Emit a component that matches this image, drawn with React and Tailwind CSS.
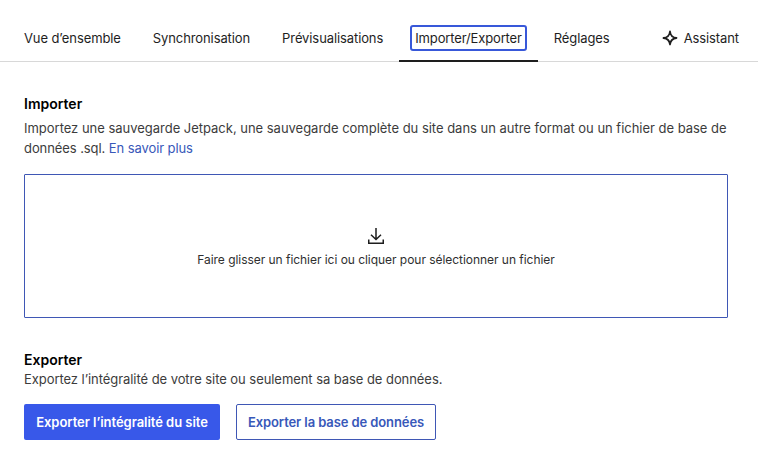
import React from "react";

const tabs = ["Vue d’ensemble", "Synchronisation", "Prévisualisations", "Importer/Exporter", "Réglages"];

function Tab({ label }) {
  const active = label === "Importer/Exporter";
  return (
    <button
      className={
        active
          ? "flex h-[62px] items-start border-b-2 border-[#1e1e1e] pl-[11px] pr-[11px] pt-[25px]"
          : "flex h-[62px] items-start px-[16px] pt-[25px]"
      }
    >
      <span
        className={
          active
            ? "flex h-[26px] items-center rounded-[3px] border-2 border-[#3858d9] px-[3px] tracking-[-0.14px]"
            : "flex h-[26px] items-center"
        }
      >
        {label}
      </span>
    </button>
  );
}

export default function App() {
  return (
    <div className="h-[464px] w-[758px] overflow-hidden bg-white font-['Inter',sans-serif] text-[13px] leading-[20px] text-[#1e1e1e]">
      <nav className="flex h-[62px] items-start border-b border-[#d8d8d8] pl-[8px] pr-[19px] tracking-[-0.1px]">
        {tabs.map((t) => (
          <Tab key={t} label={t} />
        ))}
        <div className="ml-auto flex h-[76px] items-center gap-[6px]">
          <svg width="16" height="16" viewBox="0 0 16 16" fill="none" stroke="#1e1e1e" strokeWidth="1.8" strokeLinejoin="round">
            <path d="M8 1.5C8.4 5.4 10.4 7.6 14.5 8C10.4 8.4 8.4 10.6 8 14.5C7.6 10.6 5.6 8.4 1.5 8C5.6 7.6 7.6 5.4 8 1.5Z" />
          </svg>
          <span>Assistant</span>
        </div>
      </nav>

      <main className="px-[24px] pt-[32px]">
        <h2 className="text-[14px] font-semibold leading-[20px] text-black">Importer</h2>
        <p className="mt-[4px] tracking-[-0.02px] text-[#3c3c3c]">
          Importez une sauvegarde Jetpack, une sauvegarde complète du site dans un autre format ou un fichier de base de{" "}
          <span className="tracking-[-0.08px]">données .sql.</span>{" "}
          <a className="tracking-[-0.1px] text-[#3858b9]">En savoir plus</a>
        </p>

        <div className="mt-[16px] flex h-[144px] w-[704px] flex-col items-center justify-center rounded-[1px] border border-[#3f57b5] pt-[1px]">
          <svg width="24" height="24" viewBox="0 0 24 24" fill="none" stroke="#1e1e1e" strokeWidth="1.5">
            <path d="M12 4V15.5M7 10.8L12 15.5L17 10.8M4.75 15.5V19.25H19.25V15.5" />
          </svg>
          <span className="mt-[2px] text-[12px] leading-[20px] tracking-[-0.04px] text-[#2f2f2f]">
            Faire glisser un fichier ici ou cliquer pour sélectionner un fichier
          </span>
        </div>

        <h2 className="mt-[32px] text-[14px] font-semibold leading-[19px] text-black">Exporter</h2>
        <p className="tracking-[-0.06px] text-[#3c3c3c]">Exportez l’intégralité de votre site ou seulement sa base de données.</p>

        <div className="mt-[15px] flex gap-[16px]">
          <button className="h-[36px] w-[196px] rounded-[2px] bg-[#3858e9] font-semibold tracking-[-0.04px] text-white">
            Exporter l’intégralité du site
          </button>
          <button className="h-[36px] w-[200px] rounded-[2px] border border-[#3f57b5] font-semibold tracking-[-0.1px] text-[#3858b9]">
            Exporter la base de données
          </button>
        </div>
      </main>
    </div>
  );
}
